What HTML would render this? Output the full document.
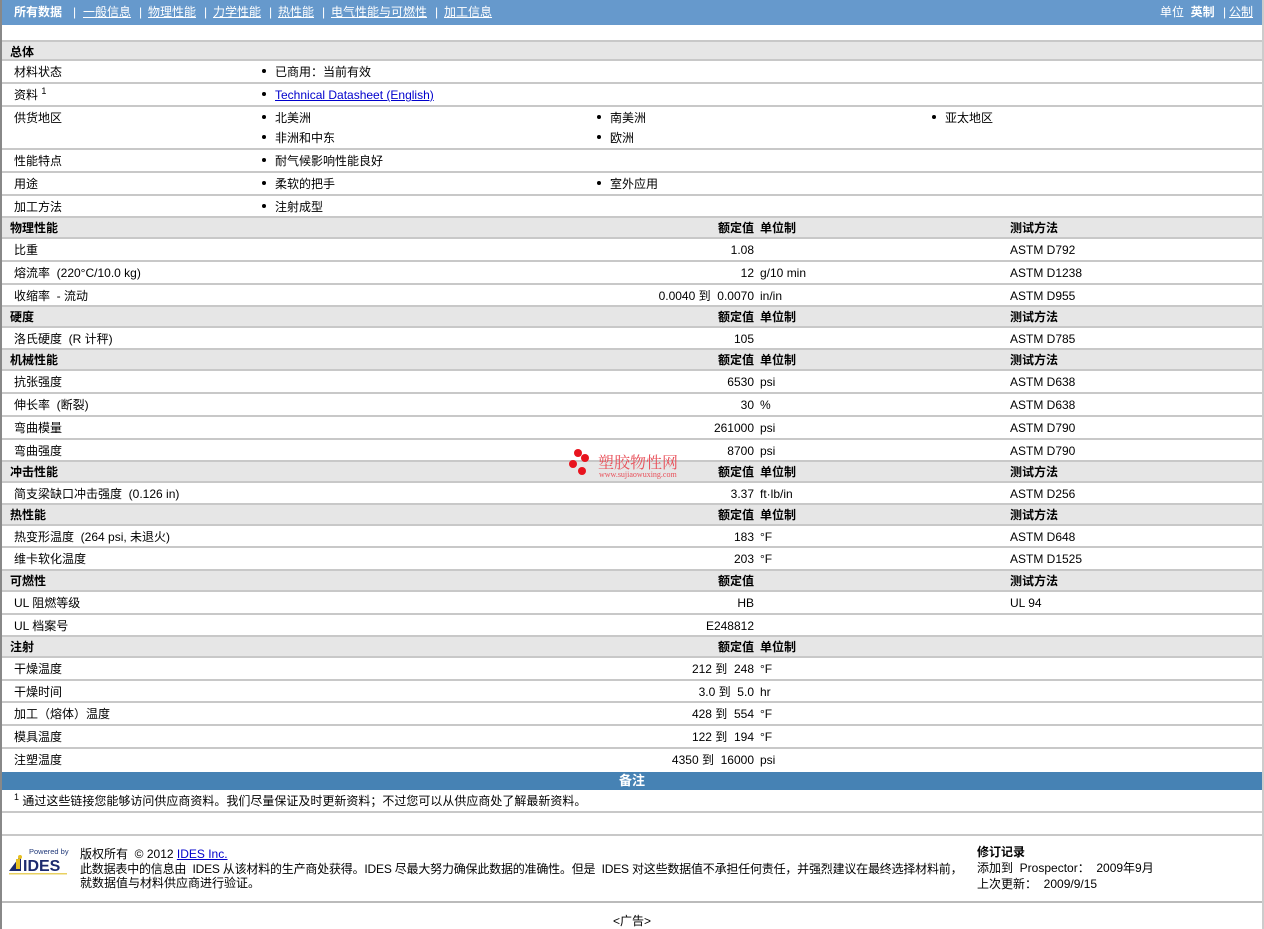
<!DOCTYPE html>
<html><head><meta charset="utf-8">
<style>
*{margin:0;padding:0;box-sizing:border-box}
body{width:1264px;height:929px;background:#fff;font:12px "Liberation Sans","Noto Sans CJK SC",sans-serif;color:#000;position:relative;overflow:hidden}
#frame{position:absolute;left:0;top:0;width:1262px;height:929px;border-left:2px solid #888}
#sb{position:absolute;left:1262px;top:0;width:2px;height:929px;background:#ccc}
.nav{position:absolute;left:2px;top:0;width:1260px;height:25px;background:#6699cc;color:#fff;font-size:12px}
.nav span{position:absolute;top:4px;white-space:nowrap;line-height:16px}
.nav u{text-decoration:underline}
.r{position:absolute;left:2px;width:1260px;border-bottom:2px solid #c8c8c8}
.h{background:#e6e6e6;font-weight:bold}
.r span{position:absolute;top:3px;white-space:nowrap;line-height:16px}
.h span{top:2px}
.l{left:12px}
.h .l{left:8px}
.v{right:508px;text-align:right}
.u{left:758px}
.t{left:1008px}
.b1{left:260px}.b2{left:595px}.b3{left:930px}
.b1::before,.b2::before,.b3::before{content:"";display:inline-block;width:4px;height:4px;border-radius:50%;background:#000;margin-right:9px;vertical-align:3px}
a{color:#00c;text-decoration:underline}
sup{font-size:9px;vertical-align:5px;line-height:0}
</style></head><body>
<div id="frame"></div><div id="sb"></div>
<div class="nav">
<span style="left:12px"><b>所有数据</b></span><span style="left:71px">|</span>
<span style="left:81px"><u>一般信息</u></span><span style="left:137px">|</span>
<span style="left:146px"><u>物理性能</u></span><span style="left:202px">|</span>
<span style="left:211px"><u>力学性能</u></span><span style="left:267px">|</span>
<span style="left:276px"><u>热性能</u></span><span style="left:320px">|</span>
<span style="left:329px"><u>电气性能与可燃性</u></span><span style="left:433px">|</span>
<span style="left:442px"><u>加工信息</u></span>
<span style="left:1158px">单位 &nbsp;<b>英制</b></span><span style="left:1221px">|</span><span style="left:1227px"><u>公制</u></span>
</div>

<div class="r h" style="top:40px;height:21px;border-top:2px solid #c8c8c8"><span class="l">总体</span></div>
<div class="r" style="top:61px;height:23px"><span class="l">材料状态</span><span class="b1">已商用：当前有效</span></div>
<div class="r" style="top:84px;height:23px"><span class="l">资料 <sup>1</sup></span><span class="b1"><a>Technical Datasheet (English)</a></span></div>
<div class="r" style="top:107px;height:43px"><span class="l">供货地区</span><span class="b1">北美洲</span><span class="b2">南美洲</span><span class="b3">亚太地区</span><span class="b1" style="top:23px">非洲和中东</span><span class="b2" style="top:23px">欧洲</span></div>
<div class="r" style="top:150px;height:23px"><span class="l">性能特点</span><span class="b1">耐气候影响性能良好</span></div>
<div class="r" style="top:173px;height:23px"><span class="l">用途</span><span class="b1">柔软的把手</span><span class="b2">室外应用</span></div>
<div class="r" style="top:196px;height:22px"><span class="l">加工方法</span><span class="b1">注射成型</span></div>

<div class="r h" style="top:218px;height:21px"><span class="l">物理性能</span><span class="v">额定值</span><span class="u">单位制</span><span class="t">测试方法</span></div>
<div class="r" style="top:239px;height:23px"><span class="l">比重</span><span class="v">1.08</span><span class="t">ASTM D792</span></div>
<div class="r" style="top:262px;height:23px"><span class="l">熔流率 &nbsp;(220°C/10.0 kg)</span><span class="v">12</span><span class="u">g/10 min</span><span class="t">ASTM D1238</span></div>
<div class="r" style="top:285px;height:22px"><span class="l">收缩率 &nbsp;- 流动</span><span class="v">0.0040 到 &nbsp;0.0070</span><span class="u">in/in</span><span class="t">ASTM D955</span></div>

<div class="r h" style="top:307px;height:21px"><span class="l">硬度</span><span class="v">额定值</span><span class="u">单位制</span><span class="t">测试方法</span></div>
<div class="r" style="top:328px;height:22px"><span class="l">洛氏硬度 &nbsp;(R 计秤)</span><span class="v">105</span><span class="t">ASTM D785</span></div>

<div class="r h" style="top:350px;height:21px"><span class="l">机械性能</span><span class="v">额定值</span><span class="u">单位制</span><span class="t">测试方法</span></div>
<div class="r" style="top:371px;height:23px"><span class="l">抗张强度</span><span class="v">6530</span><span class="u">psi</span><span class="t">ASTM D638</span></div>
<div class="r" style="top:394px;height:23px"><span class="l">伸长率 &nbsp;(断裂)</span><span class="v">30</span><span class="u">%</span><span class="t">ASTM D638</span></div>
<div class="r" style="top:417px;height:23px"><span class="l">弯曲模量</span><span class="v">261000</span><span class="u">psi</span><span class="t">ASTM D790</span></div>
<div class="r" style="top:440px;height:22px"><span class="l">弯曲强度</span><span class="v">8700</span><span class="u">psi</span><span class="t">ASTM D790</span></div>

<div class="r h" style="top:462px;height:21px"><span class="l">冲击性能</span><span class="v">额定值</span><span class="u">单位制</span><span class="t">测试方法</span></div>
<div class="r" style="top:483px;height:22px"><span class="l">简支梁缺口冲击强度 &nbsp;(0.126 in)</span><span class="v">3.37</span><span class="u">ft·lb/in</span><span class="t">ASTM D256</span></div>

<div class="r h" style="top:505px;height:21px"><span class="l">热性能</span><span class="v">额定值</span><span class="u">单位制</span><span class="t">测试方法</span></div>
<div class="r" style="top:526px;height:22px"><span class="l">热变形温度 &nbsp;(264 psi, 未退火)</span><span class="v">183</span><span class="u">°F</span><span class="t">ASTM D648</span></div>
<div class="r" style="top:548px;height:23px"><span class="l">维卡软化温度</span><span class="v">203</span><span class="u">°F</span><span class="t">ASTM D1525</span></div>

<div class="r h" style="top:571px;height:21px"><span class="l">可燃性</span><span class="v">额定值</span><span class="t">测试方法</span></div>
<div class="r" style="top:592px;height:23px"><span class="l">UL 阻燃等级</span><span class="v">HB</span><span class="t">UL 94</span></div>
<div class="r" style="top:615px;height:22px"><span class="l">UL 档案号</span><span class="v">E248812</span></div>

<div class="r h" style="top:637px;height:21px"><span class="l">注射</span><span class="v">额定值</span><span class="u">单位制</span></div>
<div class="r" style="top:658px;height:23px"><span class="l">干燥温度</span><span class="v">212 到 &nbsp;248</span><span class="u">°F</span></div>
<div class="r" style="top:681px;height:22px"><span class="l">干燥时间</span><span class="v">3.0 到 &nbsp;5.0</span><span class="u">hr</span></div>
<div class="r" style="top:703px;height:23px"><span class="l">加工（熔体）温度</span><span class="v">428 到 &nbsp;554</span><span class="u">°F</span></div>
<div class="r" style="top:726px;height:23px"><span class="l">模具温度</span><span class="v">122 到 &nbsp;194</span><span class="u">°F</span></div>
<div class="r" style="top:749px;height:23px;border:none"><span class="l">注塑温度</span><span class="v">4350 到 &nbsp;16000</span><span class="u">psi</span></div>

<div style="position:absolute;left:2px;top:772px;width:1260px;height:18px;background:#4682b4;color:#fff;font-weight:bold;font-size:13px;text-align:center;line-height:17px">备注</div>
<div class="r" style="top:790px;height:23px"><span class="l"><sup>1</sup> 通过这些链接您能够访问供应商资料。我们尽量保证及时更新资料；不过您可以从供应商处了解最新资料。</span></div>
<div class="r" style="top:813px;height:23px"></div>

<div class="r" style="top:836px;height:67px;border-bottom:2px solid #bbb">
<svg style="position:absolute;left:5px;top:11px" width="62" height="28" viewBox="0 0 62 28">
<text x="22" y="7" font-family="Liberation Sans" font-size="7.5" fill="#223a7a">Powered by</text>
<polygon points="2,24 14,8 14,24" fill="#1c2a6e"/>
<rect x="9" y="12" width="4" height="10" fill="#e8c020"/>
<circle cx="13" cy="10" r="2" fill="#e8c020"/>
<text x="16" y="24" font-family="Liberation Sans" font-weight="bold" font-size="16" fill="#1c2a6e">IDES</text>
<rect x="2" y="26" width="58" height="1.5" fill="#e8d060"/>
</svg>
<span style="left:78px;top:10px">版权所有 &nbsp;© 2012 <a>IDES Inc.</a></span>
<span style="left:78px;top:25px;letter-spacing:-0.2px">此数据表中的信息由 &nbsp;IDES 从该材料的生产商处获得。IDES 尽最大努力确保此数据的准确性。但是 &nbsp;IDES 对这些数据值不承担任何责任，并强烈建议在最终选择材料前，</span>
<span style="left:78px;top:39px">就数据值与材料供应商进行验证。</span>
<span style="left:975px;top:8px;font-weight:bold">修订记录</span>
<span style="left:975px;top:24px">添加到 &nbsp;Prospector： &nbsp;2009年9月</span>
<span style="left:975px;top:40px">上次更新： &nbsp;2009/9/15</span>
</div>
<div style="position:absolute;left:2px;top:912px;width:1260px;text-align:center;font-size:12px">&lt;广告&gt;</div>

<div style="position:absolute;left:569px;top:447px;width:130px;height:36px">
<div style="position:absolute;left:5px;top:2px;width:8px;height:8px;border-radius:50%;background:#e8141e"></div>
<div style="position:absolute;left:12px;top:7px;width:8px;height:8px;border-radius:50%;background:#e8141e"></div>
<div style="position:absolute;left:0;top:13px;width:8px;height:8px;border-radius:50%;background:#e8141e"></div>
<div style="position:absolute;left:9px;top:20px;width:8px;height:8px;border-radius:50%;background:#e8141e"></div>
<div style="position:absolute;left:29px;top:3px;font-size:16px;color:#e8505a;font-family:'Noto Serif CJK SC',serif;white-space:nowrap">塑胶物性网</div>
<div style="position:absolute;left:30px;top:23px;font-size:8px;color:#e8505a;font-family:'Liberation Serif',serif;white-space:nowrap">www.sujiaowuxing.com</div>
</div>
</body></html>
